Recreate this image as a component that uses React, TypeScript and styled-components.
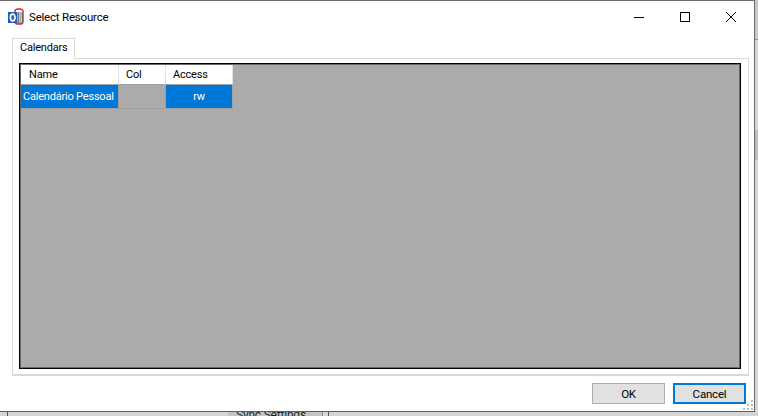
import React from 'react';
import styled, { createGlobalStyle } from 'styled-components';

const GlobalStyle = createGlobalStyle`
	html, body {
		margin: 0;
		padding: 0;
		background: #c9c9c9;
		overflow: hidden;
	}
	body {
		font-family: Roboto, 'Liberation Sans', Arial, sans-serif;
		font-size: 11px;
		letter-spacing: -0.2px;
		color: #000;
	}
`;

const Desktop = styled.div`
	width: 758px;
	height: 416px;
	display: grid;
	grid-template-columns: 755px 3px;
	grid-template-rows: 412px 4px;
	overflow: hidden;
	background: #c9c9c9;
`;

const Dialog = styled.div`
	box-sizing: border-box;
	grid-column: 1;
	grid-row: 1;
	display: flex;
	flex-direction: column;
	background: #fff;
	border-top: 1px solid #6d6d6d;
	border-right: 1px solid #6b6b6b;
	border-bottom: 1px solid #5f5f5f;
`;

const TitleBar = styled.div`
	height: 31px;
	display: flex;
	align-items: center;
	flex-shrink: 0;
	padding-left: 8px;
`;

const TitleText = styled.span`
	margin-left: 5px;
	font-size: 11.5px;
`;

const WindowButtons = styled.div`
	margin-left: auto;
	display: flex;
`;

const WindowButton = styled.div`
	width: 46px;
	height: 30px;
	display: flex;
	align-items: center;
	justify-content: center;
`;

const TabStrip = styled.div`
	height: 26px;
	display: flex;
	align-items: flex-end;
	margin: 0 5px 0 12px;
	flex-shrink: 0;
`;

const Tab = styled.div`
	box-sizing: border-box;
	height: 21px;
	width: 63px;
	padding: 2px 0 0 7px;
	border: 1px solid #d9d9d9;
	border-bottom: none;
	margin-bottom: -1px;
	background: #fff;
	position: relative;
	z-index: 1;
`;

const TabPanel = styled.div`
	box-sizing: border-box;
	height: 318px;
	margin: 0 5px 0 12px;
	padding: 4px 7px 5px 6px;
	border: 1px solid #d9d9d9;
	border-bottom-width: 2px;
	display: flex;
`;

const GridView = styled.div`
	flex: 1;
	border: 1px solid #000;
	background: #ababab;
	padding: 1px;
	box-shadow: inset 0 0 0 1px #6a6a6a;
`;

const GridTable = styled.div`
	display: grid;
	grid-template-columns: 98px 47px 67px;
	grid-template-rows: 20px 24px;
	width: 212px;
`;

const HeaderCell = styled.div<{ $indent: number }>`
	background: #fff;
	display: flex;
	align-items: center;
	padding-left: ${p => p.$indent}px;
	border-right: 1px solid #e3e3e3;
	border-bottom: 1px solid #a0a0a0;
`;

const DataCell = styled.div<{ $selected?: boolean; $center?: boolean }>`
	box-sizing: border-box;
	display: flex;
	align-items: center;
	justify-content: ${p => (p.$center ? 'center' : 'flex-start')};
	padding-left: ${p => (p.$center ? 0 : 2)}px;
	padding-bottom: 1px;
	white-space: nowrap;
	color: #fff;
	background: ${p => (p.$selected ? '#0078d7' : '#ababab')};
	border-right: 1px solid #a0a0a0;
	border-bottom: 1px solid #a0a0a0;
`;

const Footer = styled.div`
	flex: 1;
	display: flex;
	justify-content: flex-end;
	align-items: flex-start;
	gap: 8px;
	padding: 7px 8px 0 0;
	position: relative;
`;

const DialogButton = styled.button<{ $default?: boolean }>`
	box-sizing: border-box;
	width: 73px;
	height: 21px;
	padding: 0;
	font: inherit;
	font-size: 11.5px;
	letter-spacing: inherit;
	color: #000;
	background: #e1e1e1;
	border: ${p => (p.$default ? '2px solid #0078d7' : '1px solid #adadad')};
`;

const Grip = styled.svg`
	position: absolute;
	right: 1px;
	bottom: 1px;
`;

const BackdropBottom = styled.div`
	grid-column: 1 / 3;
	grid-row: 2;
	background: #d4d4d4;
	display: flex;
	overflow: hidden;
	padding-left: 7px;
`;

const BackdropLine = styled.div<{ $width: number }>`
	width: ${p => p.$width}px;
	border-left: 1px solid #555;
	flex-shrink: 0;
`;

const ClippedButton = styled.div`
	box-sizing: border-box;
	width: 95px;
	height: 4px;
	padding-left: 8px;
	margin-right: 5px;
	background: #c4c4c4;
	border-right: 1px solid #8c8c8c;
	font-size: 12px;
	line-height: 6px;
	color: #222;
	white-space: nowrap;
	flex-shrink: 0;
`;

const BackdropRight = styled.div`
	grid-column: 2;
	grid-row: 1;
	background: linear-gradient(
		to bottom,
		#c9c9c9 0,
		#c9c9c9 39px,
		#8e8e8e 39px,
		#8e8e8e 40px,
		#d6d6d6 40px,
		#d6d6d6 130px,
		#bdbdbd 130px,
		#bdbdbd 160px,
		#d6d6d6 160px
	);
`;

const AppIcon = () => (
	<svg width="16" height="17" viewBox="0 0 16 17">
		<path d="M7 4V3a3 2.4 0 0 1 3-2h2a3 2.4 0 0 1 3 2v11a3 2.4 0 0 1-3 2h-2a3 2.4 0 0 1-3-2" fill="none" stroke="#d9262b" strokeWidth="1.4" />
		<rect x="0" y="4" width="9.5" height="11" fill="#1f5fb8" />
		<ellipse cx="4.7" cy="9.5" rx="2.3" ry="3.3" fill="none" stroke="#fff" strokeWidth="1.7" />
		<rect x="10.5" y="5" width="4" height="10" fill="#e8e8e8" stroke="#555" strokeWidth="0.8" />
		<path d="M11.5 7h2M11.5 9h2M11.5 11h2M11.5 13h2" stroke="#444" strokeWidth="0.8" />
	</svg>
);

const MinimizeIcon = () => (
	<svg width="10" height="10" viewBox="0 0 10 10">
		<path d="M0 5.5h10" stroke="#000" strokeWidth="1" />
	</svg>
);

const MaximizeIcon = () => (
	<svg width="10" height="10" viewBox="0 0 10 10">
		<rect x="0.5" y="0.5" width="9" height="9" fill="none" stroke="#000" strokeWidth="1" />
	</svg>
);

const CloseIcon = () => (
	<svg width="10" height="10" viewBox="0 0 10 10">
		<path d="M0 0l10 10M10 0L0 10" stroke="#000" strokeWidth="1" />
	</svg>
);

const App = () => (
	<>
		<GlobalStyle />
		<Desktop>
			<Dialog>
				<TitleBar>
					<AppIcon />
					<TitleText>Select Resource</TitleText>
					<WindowButtons>
						<WindowButton>
							<MinimizeIcon />
						</WindowButton>
						<WindowButton>
							<MaximizeIcon />
						</WindowButton>
						<WindowButton>
							<CloseIcon />
						</WindowButton>
					</WindowButtons>
				</TitleBar>
				<TabStrip>
					<Tab>Calendars</Tab>
				</TabStrip>
				<TabPanel>
					<GridView>
						<GridTable>
							<HeaderCell $indent={8}>Name</HeaderCell>
							<HeaderCell $indent={7}>Col</HeaderCell>
							<HeaderCell $indent={7}>Access</HeaderCell>
							<DataCell $selected>Calendário Pessoal</DataCell>
							<DataCell />
							<DataCell $selected $center>
								rw
							</DataCell>
						</GridTable>
					</GridView>
				</TabPanel>
				<Footer>
					<DialogButton>OK</DialogButton>
					<DialogButton $default>Cancel</DialogButton>
					<Grip width="10" height="10" viewBox="0 0 10 10">
						<path d="M8 0h2v2H8zM4 4h2v2H4zM8 4h2v2H8zM0 8h2v2H0zM4 8h2v2H4zM8 8h2v2H8z" fill="#bdbdbd" />
					</Grip>
				</Footer>
			</Dialog>
			<BackdropRight />
			<BackdropBottom>
				<BackdropLine $width={220} />
				<ClippedButton>Sync Settings</ClippedButton>
				<BackdropLine $width={100} />
			</BackdropBottom>
		</Desktop>
	</>
);

export default App;
